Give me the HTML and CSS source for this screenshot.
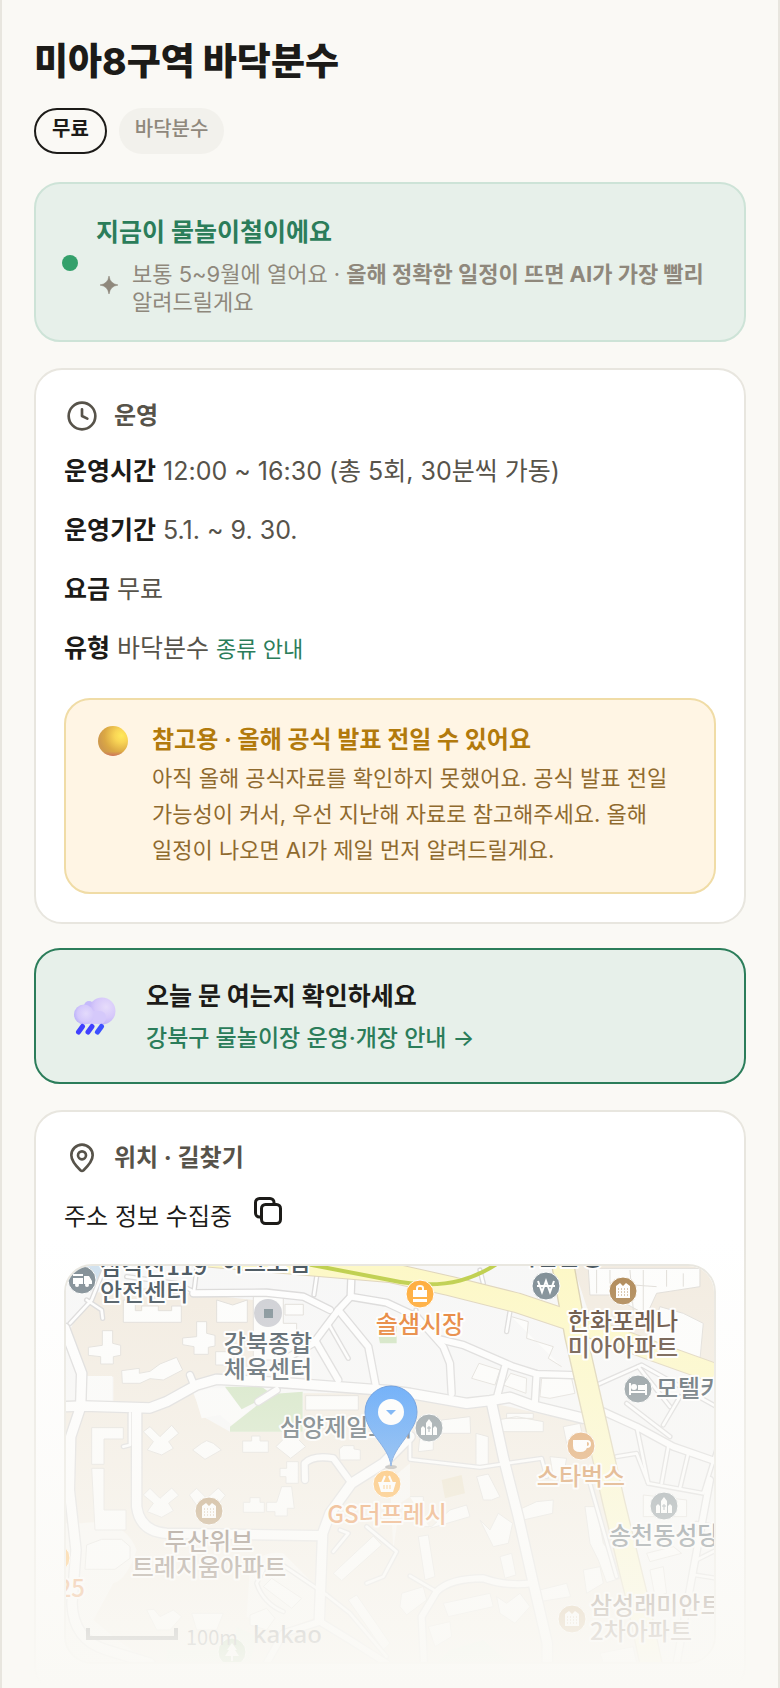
FILE: index.html
```html
<!DOCTYPE html>
<html lang="ko">
<head>
<meta charset="utf-8">
<meta name="viewport" content="width=device-width, initial-scale=1">
<title>미아8구역 바닥분수</title>
<link rel="stylesheet" href="styles.css">
</head>
<body>
<main class="page">
  <h1 class="title">미아8구역 바닥분수</h1>
  <ul class="tags">
    <li class="tag tag-strong">무료</li>
    <li class="tag">바닥분수</li>
  </ul>

  <section class="season">
    <span class="dot"></span>
    <div class="season-body">
      <h2 class="season-title">지금이 물놀이철이에요</h2>
      <div class="season-note">
        <svg class="spark" viewBox="0 0 16 16" aria-hidden="true"><path d="M8 0Q9 7 16 8Q9 9 8 16Q7 9 0 8Q7 7 8 0Z" fill="currentColor" stroke="currentColor" stroke-width="0.500"/></svg>
        <p>보통 5~9월에 열어요 · <strong>올해 정확한 일정이 뜨면 AI가 가장 빨리</strong> 알려드릴게요</p>
      </div>
    </div>
  </section>

  <section class="card">
    <h2 class="card-head">
      <span class="head-icon"><svg viewBox="0 0 24 24" aria-hidden="true"><circle cx="12" cy="12" r="10"/><path d="M12 7v5l4 2"/></svg></span>
      운영
    </h2>
    <dl class="facts">
      <div><dt>운영시간</dt> <dd>12:00 ~ 16:30 (총 5회, 30분씩 가동)</dd></div>
      <div><dt>운영기간</dt> <dd>5.1. ~ 9. 30.</dd></div>
      <div><dt>요금</dt> <dd>무료</dd></div>
      <div><dt>유형</dt> <dd>바닥분수 <a class="kind" href="#kinds">종류 안내</a></dd></div>
    </dl>
    <div class="notice">
      <svg class="notice-icon" viewBox="0 0 30 30" aria-hidden="true">
        <defs>
          <radialGradient id="gold" cx="0.78" cy="0.32" r="0.75"><stop offset="0" stop-color="#ffe95c"/><stop offset="0.3" stop-color="#f9d555"/><stop offset="0.75" stop-color="#dba844"/><stop offset="1" stop-color="#cf9a4c"/></radialGradient>
          <linearGradient id="goldBase" x1="0" y1="0" x2="0" y2="1"><stop offset="0.85" stop-color="#d06a6a" stop-opacity="0"/><stop offset="1" stop-color="#d0605e" stop-opacity="0.7"/></linearGradient>
        </defs>
        <circle cx="15" cy="15" r="15" fill="url(#gold)"/><circle cx="15" cy="15" r="15" fill="url(#goldBase)"/>
      </svg>
      <div class="notice-body">
        <h3 class="notice-title">참고용 · 올해 공식 발표 전일 수 있어요</h3>
        <p class="notice-text">아직 올해 공식자료를 확인하지 못했어요. 공식 발표 전일 가능성이 커서, 우선 지난해 자료로 참고해주세요. 올해 일정이 나오면 AI가 제일 먼저 알려드릴게요.</p>
      </div>
    </div>
  </section>

  <a class="check" href="#guide">
    <svg class="cloud" viewBox="0 0 42 38" aria-hidden="true">
      <defs>
        <radialGradient id="puffA" cx="0.65" cy="0.35" r="0.7"><stop offset="0" stop-color="#e6dcfb"/><stop offset="0.6" stop-color="#d6c8fa"/><stop offset="1" stop-color="#bdb0f8"/></radialGradient>
        <radialGradient id="puffB" cx="0.6" cy="0.45" r="0.6"><stop offset="0" stop-color="#e3dafc"/><stop offset="0.7" stop-color="#d4c8fb"/><stop offset="1" stop-color="#bdb3fa"/></radialGradient>
      </defs>
      <circle cx="15" cy="9" r="5" fill="#c5bafb"/>
      <circle cx="28" cy="14" r="13.500" fill="url(#puffA)"/>
      <rect x="8" y="14" width="24" height="13" rx="6" fill="#d5c9fb"/>
      <circle cx="10" cy="17.500" r="10" fill="url(#puffB)"/>
      <g stroke="#4040ff" stroke-width="5" stroke-linecap="round"><path d="M8.500 29.500L4.500 35"/><path d="M18 29.500L14 35"/><path d="M27.500 29.500L23.500 35" stroke="#3c50ff"/></g>
    </svg>
    <span class="check-body">
      <strong class="check-title">오늘 문 여는지 확인하세요</strong>
      <span class="check-link">강북구 물놀이장 운영·개장 안내 →</span>
    </span>
  </a>

  <section class="card">
    <h2 class="card-head">
      <span class="head-icon"><svg viewBox="0 0 24 24" aria-hidden="true"><path d="M20 10c0 4.500-4 8.500-6.800 11.200a1.800 1.800 0 0 1-2.400 0C8 18.500 4 14.500 4 10a8 8 0 0 1 16 0Z"/><circle cx="12" cy="10" r="3"/></svg></span>
      위치 · 길찾기
    </h2>
    <div class="address">
      <span>주소 정보 수집중</span>
      <button class="copy" type="button" aria-label="주소 복사">
        <svg viewBox="0 0 28 28" aria-hidden="true"><rect x="7.500" y="7.500" width="19" height="19" rx="4"/><path d="M7.500 20H5.500a4 4 0 0 1-4-4V5.500a4 4 0 0 1 4-4H16a4 4 0 0 1 4 4v2"/></svg>
      </button>
    </div>
    <div class="map">
      <svg class="map-art" viewBox="0 0 648 396" preserveAspectRatio="xMidYMin slice" role="img" aria-label="지도">
        <defs>
          <linearGradient id="pin" x1="0" y1="0" x2="0" y2="1"><stop offset="0" stop-color="#3590fb"/><stop offset="1" stop-color="#3a8ff0"/></linearGradient>
          <g id="roads" fill="none" stroke-linejoin="round" stroke-linecap="round">
            <g class="r-l">
              <path d="M40 470L100 468L300 474L350 455L440 405L500 388L700 398L1020 422L1080 430L1250 460L1320 452L1380 442L1450 468L1600 505"/>
              <path d="M44 235L95 370L92 470L62 560L58 720L78 900L66 1060Q70 1170 170 1200L300 1240"/>
              <path d="M260 480V770Q270 845 350 850L810 857"/>
              <path d="M1080 560L1000 640L905 700L840 790L818 850L808 1110"/>
              <path d="M1325 460L1362 630L1405 800L1450 1000L1492 1180V1240"/>
            </g>
            <g class="r-m">
              <path d="M905 60L902 140L865 180L790 280L700 330"/>
              <path d="M840 180L760 140L650 128L430 130"/>
              <path d="M902 140L1010 158L1100 200L1180 290L1200 340L1205 430"/>
              <path d="M865 180L955 290L978 410"/>
              <path d="M1170 268L1240 285L1390 350L1460 372L1590 376"/>
              <path d="M1365 350L1340 445"/><path d="M1460 372L1455 455"/>
              <path d="M795 270L865 390"/>
              <path d="M680 420L625 455"/><path d="M420 375L430 400"/>
              <path d="M765 690L764 640Q790 615 850 625L905 700"/>
              <path d="M1445 1000Q1370 1010 1300 985Q1200 985 1160 1025L1115 1100L1122 1240"/>
              <path d="M650 1240L700 1150L810 1115L900 1170L1010 1240"/>
              <path d="M1650 480L1760 530L1870 590L2000 635"/>
              <path d="M1980 690L1930 960L1880 1240"/>
            </g>
            <g class="r-s">
              <path d="M60 220L125 150L165 50"/><path d="M110 150L155 180L158 205"/>
              <path d="M440 60L432 125L380 100L230 80"/><path d="M800 80L792 135"/>
              <path d="M1098 180L1098 215"/><path d="M1380 185L1370 245"/>
              <path d="M1290 60L1300 100"/><path d="M835 220L895 325"/>
              <path d="M835 220L790 280"/><path d="M1080 575L1080 628L1290 652L1475 625L1490 680"/>
              <path d="M830 1035L900 1090L1010 1220"/><path d="M690 940L830 1035"/>
              <path d="M640 960L620 1000Q640 1060 700 1085"/>
              <path d="M850 905L895 850L870 840"/><path d="M950 830L1040 905L1000 980L950 1000"/>
              <path d="M1080 978L1160 1025"/><path d="M240 490V585L220 590"/>
              <path d="M1640 405L1775 345L2000 470"/><path d="M1730 460L1860 560"/><path d="M1840 525L1890 440"/><path d="M1765 350L1860 470"/>
              <path d="M1760 530L1795 700L1960 730L2000 600"/><path d="M1855 590L1835 700"/><path d="M1915 610L1890 715"/>
              <path d="M1700 620L1760 610L1795 700"/><path d="M1935 975L2000 985"/><path d="M1940 930L2000 900"/>
              <path d="M1940 820L2000 830"/><path d="M1620 700L1700 980"/>
            </g>
          </g>
        </defs>
        <g transform="scale(0.3333) translate(-48 -48)">
          <path fill="#f7f7f7" d="M0 0H2100V1300H0Z"/>
          <g fill="#f2ebe0">
            <path d="M130 130L250 110L610 150V350H540L500 390L300 465H190V380H110L50 260L70 220Z"/>
            <path d="M48 485L260 480L430 430L460 500L540 545H760V430H1080L1330 460L1600 520L1700 800L1780 1240H48Z"/>
            <path d="M1570 48H2000V345L1800 275L1620 200Z"/>
          </g>
          <path fill="#f8f6f2" d="M95 820Q220 800 260 900Q230 990 190 1000L130 1110L190 1160L300 1240H48V820ZM600 950Q640 900 700 910L800 1010V1100L680 1150L590 1100ZM1020 690L1080 640L1080 740L1050 760L1030 900Z"/>
          <path fill="#fbfbfa" d="M100 378H186V452H110ZM432 428L480 415H525L575 478L600 480L545 525L510 495L455 505Z"/>
          <path fill="#cfe3bf" d="M525 410H635L665 432L575 478ZM665 432L758 425V545H540V530ZM985 255L1000 210H1040V280H990Z"/>
          <path fill="#e2efdc" d="M350 1200H550L560 1130L620 1160L600 1240H350ZM1200 1200L1300 1170L1380 1240H1160Z"/>
          <path fill="#eadfc4" d="M1175 690L1235 675L1245 730L1185 745Z"/>
          <path fill="#cfe0ee" d="M110 48H165L130 110Z"/>
          <g class="bld">
            <path d="M220 150V217H394V168H365V182H325V168H275V182H256V150ZM500 150L548 165L592 150V217H500Z"/>
            <path d="M157 242H188V280L212 286V316L190 320V342H152V320L115 316V292L157 286ZM440 215H470V250L495 256V288L475 292V313H432V290L398 284V264L440 260ZM215 362L268 355V370L300 364L330 342L380 322L398 360L340 390L300 386L270 400H217Z"/>
            <path d="M610 140H700V220H740V330H610ZM705 163H760V195H705ZM497 305H545V345H497Z"/>
            <path d="M125 533H220V567H162V643H125ZM125 655H162V780H228V840H135ZM280 545L300 530L330 560L365 526L386 550L356 575L370 595L335 615L292 600L310 575ZM428 600L455 580L470 572L490 580L514 600L465 628ZM578 573H605V558H630V573H655V607H578ZM678 590L700 568H745L767 590L722 625Z"/>
            <path d="M767 437H925V480H767ZM868 597L880 587H912V597L931 600V630H870ZM690 655H710V635H745V700H708V680H690ZM280 735L300 715L330 745L365 714L386 736L356 760L370 782L335 802L292 785L310 760ZM418 735L440 715L470 745L505 714L526 736L490 780H450Z"/>
            <path d="M580 757H600V743H630V757H643V787H580ZM650 757H680L695 710H725L733 775H712V798H675V785H650ZM110 885L155 868H215L240 890V925L195 958H105Z"/>
            <path d="M850 970L970 858L995 885L875 992ZM640 1010L665 985L755 1045L725 1075ZM895 1050L920 1035L1020 1180L1000 1200ZM290 1080L312 1078L330 1100L370 1080L395 1100L360 1140H320ZM425 1090H520L500 1140H440ZM600 1095L650 1075L675 1105L650 1140L600 1125Z"/>
            <path d="M1385 200L1435 215L1430 265L1510 290L1495 325L1535 350M1287 340L1350 360L1335 405L1265 385ZM1382 370L1430 385L1428 430L1360 405ZM1475 385H1565L1575 430L1500 445L1470 440Z"/>
            <path d="M1175 510L1260 500L1262 550H1172ZM1342 510L1400 500L1480 515V545H1345ZM1370 490H1450V505H1370ZM1278 550L1315 560V648H1278ZM1110 555L1150 545V600L1105 605ZM1540 530L1590 520L1600 570L1550 580ZM1500 620L1550 625L1540 680H1510Z"/>
            <path d="M1615 55L1620 135H1680L1790 195L1820 130L1950 110V55ZM1640 58V130M1680 60V100L1820 110M1740 60L1750 180M1780 60V190M1850 60V110M1900 70V110M1830 170L1900 190L1960 220L1950 330L1840 325L1800 260Z"/>
            <path d="M1280 680L1315 672L1350 740L1325 750H1300ZM1080 740H1120V830H1145L1200 780L1250 765L1260 800L1140 835M1290 810L1320 840L1345 790L1388 820L1375 880L1330 890ZM1105 860L1135 855L1155 980L1125 990ZM1350 920L1385 910L1398 975L1365 985ZM1405 780L1460 755L1510 750L1508 790L1420 810Z"/>
            <path d="M1605 770H1640L1660 880L1690 920L1710 985L1670 998L1645 930L1620 880ZM1600 960L1650 950L1660 1000L1610 1030ZM1470 1020L1550 1000L1562 1040L1470 1055ZM1055 1030L1120 1010L1130 1050L1070 1095L1050 1070ZM1180 1060L1320 1030L1330 1070L1195 1100ZM1340 1040L1370 1060L1410 1030L1440 1070L1395 1120L1350 1090ZM1135 1130L1200 1115L1205 1160L1155 1190ZM1780 735L1910 750V800H1780ZM1790 910L1870 890L1895 910L1800 935ZM1800 960L1840 950L1850 1030L1815 1040ZM1650 1210L1750 1190L1760 1240H1660Z"/>
          </g>
          <use href="#roads" class="casing"/>
          <use href="#roads" class="surface"/>
          <g fill="none" stroke-linejoin="round">
            <path stroke="#d9cfae" stroke-width="70" d="M1536 30L1578 260L1610 400L1660 620L1692 760L1765 1060L1805 1250"/>
            <path stroke="#ddd2b8" stroke-width="62" d="M430 18L1020 68L1200 108L1400 158L1550 208L1800 300L2010 375"/>
            <path stroke="#fdf8c4" stroke-width="56" d="M430 18L1020 68L1200 108L1400 158L1550 208L1800 300L2010 375"/>
            <path stroke="#fdf8c4" stroke-width="62" d="M1536 30L1578 260L1610 400L1660 620L1692 760L1765 1060L1805 1250"/>
            <path stroke="#bccd45" stroke-width="12" d="M770 42L1020 90Q1140 115 1230 92Q1290 75 1340 42"/>
          </g>
        </g>

        <g class="poi" text-anchor="start">
          <g class="t-dark">
            <text x="34" y="9">삼각산119</text><text x="34" y="35">안전센터</text>
            <text x="156" y="5">아크로힘</text>
            <text x="448" y="-1">기업은행</text>
            <text x="202" y="86" text-anchor="middle">강북종합</text><text x="202" y="112" text-anchor="middle">체육센터</text>
            <text x="214" y="170">삼양제일교회</text>
            <text x="590" y="131">모텔카</text>
            <text x="543" y="278">송천동성당</text>
          </g>
          <g class="t-brown">
            <text x="557" y="64" text-anchor="middle">한화포레나</text><text x="557" y="90" text-anchor="middle">미아아파트</text>
            <text x="143" y="284" text-anchor="middle">두산위브</text><text x="143" y="310" text-anchor="middle">트레지움아파트</text>
            <text x="524" y="348">삼성래미안트</text><text x="524" y="374">2차아파트</text>
          </g>
          <g class="t-orange">
            <text x="354" y="67" text-anchor="middle">솔샘시장</text>
            <text x="321" y="257" text-anchor="middle">GS더프레시</text>
            <text x="19" y="331" text-anchor="end">25</text>
          </g>
          <text class="t-cafe" x="515" y="219" text-anchor="middle">스타벅스</text>
        </g>

        <g stroke="#ffffff" stroke-width="1">
          <circle cx="16" cy="14" r="14" fill="#7d8a92"/><circle cx="202" cy="47" r="14" fill="#cbccd2" stroke="none"/>
          <circle cx="354" cy="28" r="14" fill="#ffa72e"/><circle cx="480" cy="20" r="14" fill="#788790"/>
          <circle cx="557" cy="25" r="14" fill="#ac8450"/><circle cx="572" cy="123" r="14" fill="#7d8a90"/>
          <circle cx="363" cy="162" r="14" fill="#7d8a90"/><circle cx="515" cy="180" r="14" fill="#dc9650"/>
          <circle cx="321" cy="218" r="14" fill="#ffa72e"/><circle cx="143" cy="245" r="14" fill="#ac8450"/>
          <circle cx="598" cy="240" r="14" fill="#7d8a90"/><circle cx="506" cy="353" r="14" fill="#c09860"/>
          <circle cx="-10" cy="292" r="14" fill="#ffa72e"/><circle cx="166" cy="386" r="14" fill="#7db06e"/>
        </g>
        <g fill="#ffffff">
          <path d="M7 8h10v2H7zM7 12h10v6H7zM18 10h5l3 5v3h-8z"/><circle cx="11" cy="19" r="2"/><circle cx="21" cy="19" r="2"/>
          <path fill="#7b8b92" d="M198 43h9v9h-9z"/>
          <path d="M347 24h14v7h-14zM347 33h14v3h-14z"/><path d="M351 24v-2q0-2 3-2t3 2v2" fill="none" stroke="#ffffff" stroke-width="2"/>
          <path d="M472 15l4 11 4-11 4 11 4-11M471 20h18" fill="none" stroke="#ffffff" stroke-width="2"/>
          <path d="M550 32V20l4-3 3 3 3-3 4 3v12z"/><path class="windows" d="M552 23h10M552 26h10M552 29h10"/>
          <path d="M136 252V240l4-3 3 3 3-3 4 3v12z"/><path class="windows" d="M138 243h10M138 246h10M138 249h10"/>
          <path d="M499 360V348l4-3 3 3 3-3 4 3v12z"/><path class="windows" d="M501 351h10M501 354h10M501 357h10"/>
          <path d="M563 117h2v8h14v-7h2v11h-2v-2h-14v2h-2z"/><circle cx="568" cy="121" r="3"/><path d="M572 119h8v5h-8z"/>
          <path d="M355 169v-7l2-2 2 2v7zM360 169v-12l3-4 3 4v12zM367 169v-7l2-2 2 2v7z"/><path d="M363 160v6M361 162h4" stroke="#7d8a90"/>
          <path d="M590 247v-7l2-2 2 2v7zM595 247v-12l3-4 3 4v12zM602 247v-7l2-2 2 2v7z"/><path d="M598 238v6M596 240h4" stroke="#7d8a90"/>
          <path d="M507 174h14v6q0 6-7 6t-7-6z"/><circle cx="521" cy="178" r="3" fill="none" stroke="#ffffff" stroke-width="2"/>
          <path d="M312 216h18l-3 10h-12z"/><path d="M316 217l3-7M326 217l-3-7" stroke="#ffffff" stroke-width="2"/><path d="M318 219v4M321 219v4M324 219v4" stroke="#ffa72e"/>
          <path d="M166 377l5 7h-2l4 6h-6v5h-2v-5h-6l4-6h-2z"/>
        </g>
        <ellipse cx="325" cy="201" rx="6" ry="2" fill="#555555" opacity="0.5"/>
        <path d="M325 200C323 180 299 166 299 146A26 26 0 0 1 351 146C351 166 327 180 325 200Z" fill="url(#pin)" stroke="#2c74d4"/>
        <circle cx="325" cy="146" r="13" fill="#ffffff"/><path d="M320 144h10l-5 5z" fill="#3a90f5"/>
        <path d="M22 362v10h88v-10" fill="none" stroke="#444444" stroke-width="4"/>
        <text class="scale-text" x="120" y="379">100m</text>
        <text class="brand" x="187" y="377">kakao</text>
      </svg>
    </div>
  </section>
  <div class="fade"></div>
</main>
</body>
</html>
```
FILE: styles.css
```css
* { box-sizing: border-box; margin: 0; padding: 0; }

body {
  background: #faf9f5;
  color: #1c1b18;
  font-family: Inter, "Noto Sans CJK KR", sans-serif;
}

.page {
  position: relative;
  display: flex;
  flex-direction: column;
  height: 100vh;
  overflow: hidden;
  padding: 38px 32px 0;
  border: 0 solid #e8e6df;
  border-width: 0 2px;
}
.page > * { flex-shrink: 0; }

.title { font-size: 37px; line-height: 48px; font-weight: 800; }

.tags { display: flex; gap: 12px; margin-top: 22px; list-style: none; }
.tag {
  padding: 5px 16px 9px;
  border-radius: 23px;
  background: #f2f1ec;
  color: #8f887c;
  font-size: 20px;
  line-height: 32px;
  font-weight: 500;
}
.tag-strong {
  padding: 3px 16px 7px;
  border: 2px solid #1c1b18;
  background: #faf9f5;
  color: #1c1b18;
  font-weight: 700;
}

.season {
  display: flex;
  align-items: center;
  gap: 18px;
  margin-top: 28px;
  padding: 25px 26px 24px;
  border: 2px solid #cde3d7;
  border-radius: 26px;
  background: #e7f0ea;
}
.dot { flex: none; width: 16px; height: 16px; border-radius: 50%; background: #34a06b; }
.season-body { padding-top: 5px; }
.season-title { color: #2b7d5a; font-size: 25px; line-height: 36px; font-weight: 700; }
.season-note {
  display: flex;
  align-items: flex-start;
  gap: 14px;
  margin-top: 10px;
  padding-left: 4px;
  color: #8f887c;
  font-size: 22px;
  line-height: 28px;
  word-break: keep-all;
}
.spark { flex: none; width: 18px; height: 18px; margin-top: 16px; }

.card {
  margin-top: 26px;
  padding: 28px;
  border: 2px solid #e8e6df;
  border-radius: 28px;
  background: #ffffff;
}
.card-head {
  display: flex;
  align-items: center;
  gap: 14px;
  color: #57534a;
  font-size: 24px;
  line-height: 36px;
  font-weight: 700;
}
.head-icon { display: grid; place-items: center; width: 36px; height: 36px; }
.head-icon svg {
  width: 32px;
  height: 32px;
  fill: none;
  stroke: currentColor;
  stroke-width: 2;
  stroke-linecap: round;
  stroke-linejoin: round;
}

.facts { display: grid; gap: 18px; margin-top: 17px; color: #57534a; font-size: 25px; line-height: 41px; }
.facts dt, .facts dd { display: inline; }
.facts dt { color: #1c1b18; font-weight: 700; }
.kind { color: #2b7d5a; font-size: 22px; text-decoration: none; }

.notice {
  display: flex;
  gap: 24px;
  margin-top: 28px;
  padding: 22px 32px 24px;
  border: 2px solid #f0dca6;
  border-radius: 26px;
  background: #fff5e4;
}
.notice-icon { flex: none; width: 30px; height: 30px; margin-top: 4px; }
.notice-body { display: grid; gap: 2px; }
.notice-title { color: #b27a0c; font-size: 24px; line-height: 36px; font-weight: 700; }
.notice-text { color: #8f6a2e; font-size: 22px; line-height: 36px; word-break: keep-all; }

.check {
  display: flex;
  align-items: center;
  gap: 30px;
  margin-top: 24px;
  padding: 26px 38px;
  border: 2px solid #2b7d5a;
  border-radius: 26px;
  background: #e7f0ea;
  color: inherit;
  text-decoration: none;
}
.cloud { flex: none; width: 42px; height: 38px; }
.check-body { display: grid; gap: 4px; }
.check-title { font-size: 25px; line-height: 40px; font-weight: 700; }
.check-link { color: #2b7d5a; font-size: 23px; line-height: 36px; font-weight: 500; }

.address { display: flex; align-items: flex-start; gap: 22px; margin-top: 21px; font-size: 24px; line-height: 40px; }
.copy { width: 28px; height: 28px; border: 0; background: none; color: inherit; }
.copy svg { display: block; width: 28px; height: 28px; fill: none; stroke: currentColor; stroke-width: 3; stroke-linecap: round; }

.map {
  height: 400px;
  margin-top: 27px;
  overflow: hidden;
  border: 2px solid #e8e6df;
  border-radius: 28px;
}
.map-art { display: block; width: 100%; height: 100%; font-family: "Noto Sans CJK KR", sans-serif; }
.bld { fill: #fdfdfc; stroke: #dfdcd7; stroke-width: 3; }
.casing { stroke: #d9d8d8; --edge: 8px; }
.surface { stroke: #fefefe; --edge: 0px; }
.r-l { stroke-width: calc(28px + var(--edge)); }
.r-m { stroke-width: calc(18px + var(--edge)); }
.r-s { stroke-width: calc(8px + var(--edge)); }
.poi { font-size: 24px; font-weight: 500; stroke: #ffffff; stroke-width: 4; stroke-linejoin: round; paint-order: stroke; }
.t-dark { fill: #425059; }
.t-brown { fill: #57402f; }
.t-orange { fill: #e57826; }
.t-cafe { fill: #cf7f36; }
.windows { stroke: #ac8450; stroke-width: 1; stroke-dasharray: 1 2; }
.scale-text { font-size: 20px; fill: #444444; }
.brand { font-family: "Noto Sans", sans-serif; font-size: 24px; font-weight: 500; fill: #444444; }

.fade {
  position: absolute;
  right: 0;
  bottom: 0;
  left: 0;
  height: 450px;
  background: linear-gradient(#faf9f500, #faf9f5);
  pointer-events: none;
}
```
